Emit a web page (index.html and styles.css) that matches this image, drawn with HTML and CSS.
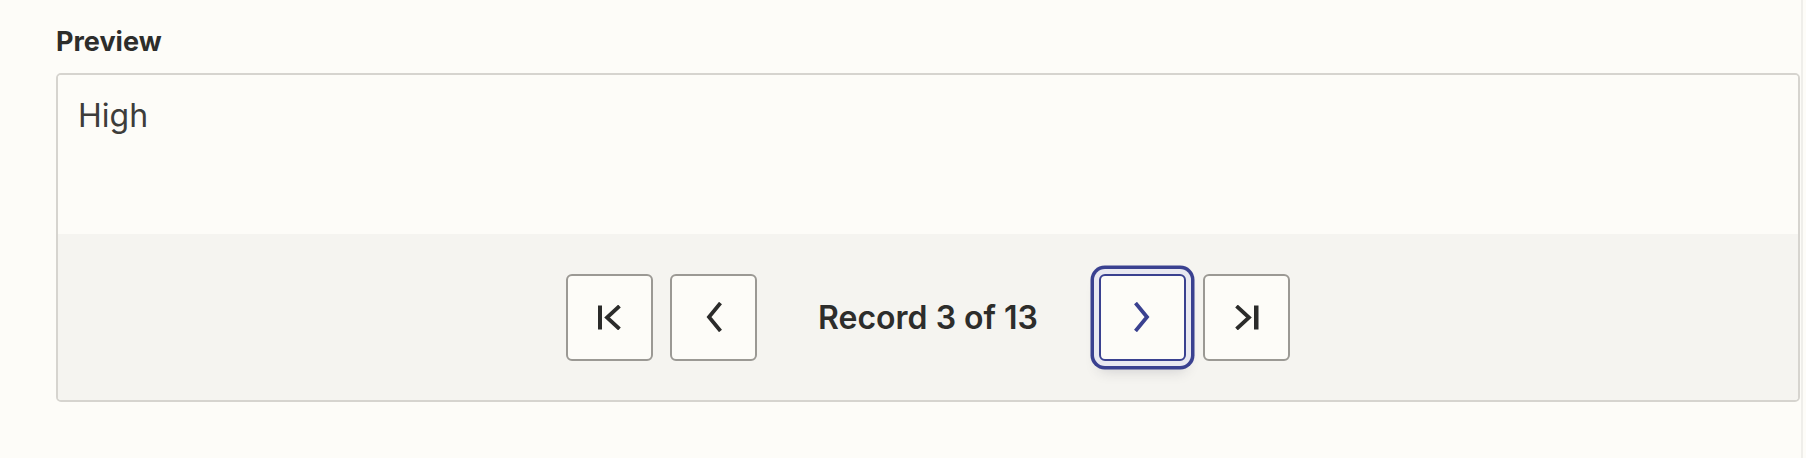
FILE: index.html
```html
<!DOCTYPE html>
<html>
<head>
    <meta charset="utf-8" />
    <title>Preview</title>
    <link rel="stylesheet" href="styles.css">
</head>
<body>
    <div class="page">
        <div class="main">
            <div class="label">Preview</div>
            <div class="preview">
                <div class="value">High</div>
                <div class="pager">
                    <button class="nav" type="button" title="First record">
                        <svg width="24" height="25" viewBox="0 0 24 25">
                            <rect x="0" y="0.5" width="4" height="24" fill="#2b2b2a" />
                            <path d="M21.5 1 L9 12.5 L21.5 24" fill="none" stroke="#2b2b2a" stroke-width="3.8" />
                        </svg>
                    </button>
                    <button class="nav" type="button" title="Previous record">
                        <svg width="18" height="30" viewBox="0 0 18 30">
                            <path d="M15.5 1 L4 15 L15.5 29" fill="none" stroke="#2b2b2a" stroke-width="3.8" />
                        </svg>
                    </button>
                    <div class="count">Record 3 of 13</div>
                    <button class="nav focus" type="button" title="Next record">
                        <svg width="18" height="30" viewBox="0 0 18 30">
                            <path d="M2.5 1 L14 15 L2.5 29" fill="none" stroke="#3a4190" stroke-width="3.8" />
                        </svg>
                    </button>
                    <button class="nav" type="button" title="Last record">
                        <svg width="25" height="25" viewBox="0 0 25 25">
                            <path d="M2.5 1 L15 12.5 L2.5 24" fill="none" stroke="#2b2b2a" stroke-width="3.8" />
                            <rect x="20" y="0.5" width="4.5" height="24" fill="#2b2b2a" />
                        </svg>
                    </button>
                </div>
            </div>
        </div>
        <div class="edge"></div>
    </div>
</body>
</html>
```

FILE: styles.css
```css
* {
    padding: 0;
    margin: 0;
    box-sizing: border-box;
}
html, body {
    height: 100%;
}
body {
    background: #fdfcf8;
    font-family: Inter, "Open Sans", sans-serif;
    color: #2d2d2b;
}
.page {
    display: flex;
    height: 100%;
}
.main {
    flex: 1;
    padding: 26px 1px 0 56px;
}
.edge {
    width: 5px;
    border-left: 2px solid #efeeea;
}
.label {
    font-size: 27px;
    font-weight: 700;
    line-height: 32px;
    margin-bottom: 15px;
}
.preview {
    border: 2px solid #d6d4cf;
    border-radius: 5px;
    overflow: hidden;
}
.value {
    height: 159px;
    padding: 23px 20px 0;
    font-size: 32px;
    line-height: 36px;
    color: #3d3d3b;
    background: #fdfcf8;
}
.pager {
    height: 166px;
    background: #f5f4f0;
    display: flex;
    align-items: center;
    justify-content: center;
    gap: 17px;
}
.nav {
    width: 87px;
    height: 87px;
    border: 2px solid #9b9994;
    border-radius: 6px;
    background: #fdfcf8;
    display: flex;
    align-items: center;
    justify-content: center;
    cursor: pointer;
}
.nav.focus {
    border-color: #3a4190;
    box-shadow: 0 0 0 5px #e9e9f1, 0 0 0 8.5px #3a4190, 0 10px 14px rgba(40, 40, 60, 0.18);
}
.count {
    margin: 0 44px;
    font-size: 32px;
    font-weight: 600;
    color: #2d2d2b;
    white-space: nowrap;
}
```
